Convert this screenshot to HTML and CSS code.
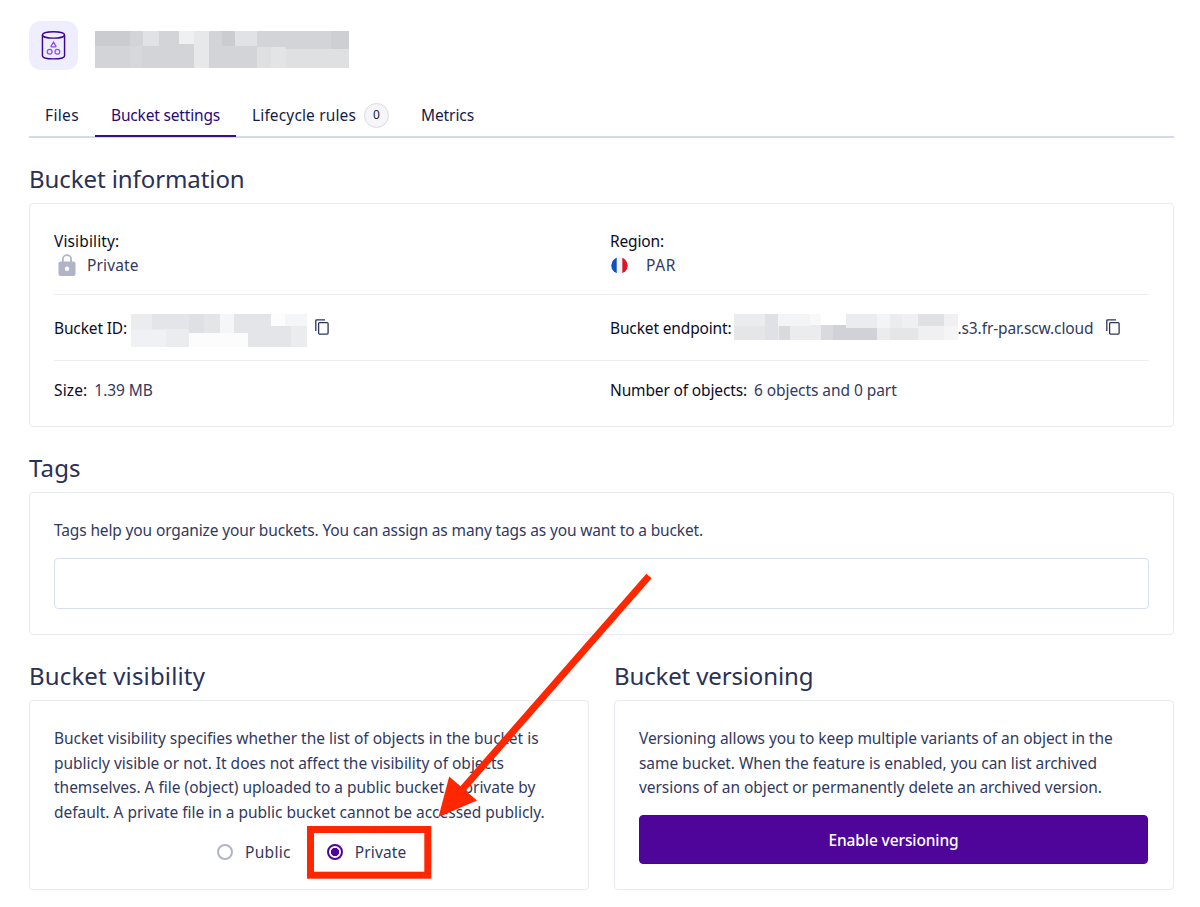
FILE: index.html
```
<!DOCTYPE html>
<html lang="en">
<head>
<meta charset="utf-8">
<title>Bucket settings</title>
<link rel="stylesheet" href="styles.css">
</head>
<body>
<main class="page">
  <header class="header">
    <div class="product-icon">
      <svg width="25" height="31" viewBox="0 0 26 32" fill="none">
        <g stroke="#390791" stroke-width="1.5"><ellipse cx="13" cy="5" rx="11.500" ry="3.300"/><path d="M1.500 5V26.600C1.500 31 24.500 31 24.500 26.600V5"/></g>
        <g stroke="#8f4bf5" stroke-width="1.3"><path d="M13 12.300L15.500 16.600Q15.700 17.400 15 17.400H11Q10.300 17.400 10.500 16.600Z" stroke-linejoin="round"/><circle cx="9" cy="22.500" r="2.500"/><circle cx="17" cy="22.500" r="2.500"/></g>
      </svg>
    </div>
    <svg class="mask" width="254" height="37" viewBox="0 0 762 111" preserveAspectRatio="none" shape-rendering="crispEdges">
      <path fill="#d3d4d7" d="M0 0h762v111H0z"/>
      <path fill="#cbccd0" d="M0 0h105v46H0zM380 0h41v46h-41z"/>
      <path fill="#d7d8db" d="M105 46h35v65h-35z"/>
      <path fill="#e1e2e5" d="M145 0h46v46h-46zM421 0h65v46h-65z"/>
      <path fill="#eff0f2" d="M252 0h44v40h-44z"/>
      <path fill="#e7e8ea" d="M296 0h46v111h-46z"/>
      <path fill="#dfe0e2" d="M486 48h86v5h190v58H486z"/>
      <path fill="#e3e4e6" d="M528 48h44v63h-44z"/>
      <path fill="#cecfd3" d="M708 0h54v53h-54z"/>
    </svg>
  </header>

  <nav class="tabs">
    <a class="tab tab-files">Files</a>
    <a class="tab tab-settings active">Bucket settings</a>
    <a class="tab tab-rules">Lifecycle rules<span class="badge">0</span></a>
    <a class="tab tab-metrics">Metrics</a>
  </nav>

  <section class="section info">
    <h2>Bucket information</h2>
    <div class="card">
      <div class="row first">
        <div class="cell">
          <div class="label wide">Visibility:</div>
          <div class="value wide">
            <svg class="lock" width="18" height="22" viewBox="0 0 18 22"><path fill="none" stroke="#b1b4c7" stroke-width="1.800" d="M4.900 8V5.200a4.100 4.100 0 0 1 8.200 0V8"/><path fill="#b1b4c7" fill-rule="evenodd" d="M2.500 7.500h13a2 2 0 0 1 2 2V20a2 2 0 0 1-2 2h-13a2 2 0 0 1-2-2V9.500a2 2 0 0 1 2-2zM9 12.500a2.200 2.200 0 1 0 0 4.400 2.200 2.200 0 0 0 0-4.400z"/></svg>
            Private
          </div>
        </div>
        <div class="cell">
          <div class="label">Region:</div>
          <div class="value region">
            <svg class="flag" width="17" height="17" viewBox="0 0 17 17"><clipPath id="round"><circle cx="8.500" cy="8.500" r="8.200"/></clipPath><g clip-path="url(#round)"><path fill="#f2f1f4" d="M0 0h17v17H0z"/><path fill="#0d51ba" d="M0 0h5.700v17H0z"/><path fill="#dc1428" d="M11.300 0H17v17h-5.700z"/></g></svg>
            PAR
          </div>
        </div>
      </div>
      <div class="row">
        <div class="cell inline">
          <span class="label">Bucket ID:</span>
          <svg class="id-mask" width="176" height="33" viewBox="0 0 528 99" preserveAspectRatio="none" shape-rendering="crispEdges">
            <path fill="#ebecee" d="M0 0h528v99H0z"/>
            <path fill="#e4e5e8" d="M63 0h112v46H63zM218 0h50v58h-50zM308 0h113v58h-113zM352 35h128v64H352z"/>
            <path fill="#dfe0e4" d="M175 0h43v58h-43z"/>
            <path fill="#f0f1f4" d="M0 47h105v52H0z"/>
            <path fill="#f5f6f8" d="M268 0h40v58h-40zM463 0h65v35h-65z"/>
            <path fill="#fcfcfd" d="M175 58h177v41H175zM421 0h42v35h-42z"/>
          </svg>
          <svg class="copy" width="14" height="16" viewBox="0 0 14 16" fill="none" stroke="#2c3459" stroke-width="1.300"><path d="M.8 12V1.900Q.8.8 1.900.8H10"/><rect x="3.600" y="3.600" width="9.500" height="11.500" rx="1"/></svg>
        </div>
        <div class="cell inline">
          <span class="label">Bucket endpoint:</span>
          <svg class="host-mask" width="224" height="26" viewBox="0 0 672 78" preserveAspectRatio="none" shape-rendering="crispEdges">
            <path fill="#ebecee" d="M0 0h672v78H0z"/>
            <path fill="#e5e6e8" d="M0 36h92v42H0zM468 42h86v36h-86z"/>
            <path fill="#e0e1e6" d="M92 0h40v78H92z"/>
            <path fill="#f3f4f6" d="M132 0h96v36h-96zM428 0h40v42h-40z"/>
            <path fill="#f8f8f9" d="M228 0h32v33h-32z"/>
            <path fill="#fff" d="M260 0h76v33h-76z"/>
            <path fill="#d9dade" d="M135 36h33v42h-33zM260 33h37v45h-37z"/>
            <path fill="#d1d2d7" d="M297 33h39v9h92v36H297z"/>
            <path fill="#e0e1e3" d="M553 0h78v36h-78z"/>
            <path fill="#f0f0f2" d="M504 0h49v42h-49zM553 36h78v42h-78zM631 0h41v36h-41z"/>
            <path fill="#f5f5f6" d="M631 36h41v42h-41z"/>
          </svg>
          <span class="host">.s3.fr-par.scw.cloud</span>
          <svg class="copy" width="14" height="16" viewBox="0 0 14 16" fill="none" stroke="#2c3459" stroke-width="1.300"><path d="M.8 12V1.900Q.8.8 1.900.8H10"/><rect x="3.600" y="3.600" width="9.500" height="11.500" rx="1"/></svg>
        </div>
      </div>
      <div class="row last">
        <div class="cell inline"><span class="label wide">Size:</span><span class="after">1.39 MB</span></div>
        <div class="cell inline"><span class="label">Number of objects:</span><span class="after">6 objects and 0 part</span></div>
      </div>
    </div>
  </section>

  <section class="section tags">
    <h2>Tags</h2>
    <div class="card">
      <p>Tags help you organize your buckets. You can assign as many tags as you want to a bucket.</p>
      <div class="tag-input"></div>
    </div>
  </section>

  <div class="columns">
    <section class="section visibility">
      <h2>Bucket visibility</h2>
      <div class="card">
        <p>Bucket visibility specifies whether the list of objects in the bucket is<br>publicly visible or not. It does not affect the visibility of objects<br>themselves. A file (object) uploaded to a public bucket is private by<br>default. A private file in a public bucket cannot be accessed publicly.</p>
        <div class="radios">
          <label class="option public"><i class="radio"></i>Public</label>
          <label class="option wide"><i class="radio checked"></i>Private</label>
        </div>
      </div>
    </section>
    <section class="section versioning">
      <h2>Bucket versioning</h2>
      <div class="card">
        <p>Versioning allows you to keep multiple variants of an object in the<br>same bucket. When the feature is enabled, you can list archived<br>versions of an object or permanently delete an archived version.</p>
        <button class="primary">Enable versioning</button>
      </div>
    </section>
  </div>

  <svg class="annotation" width="1200" height="907" viewBox="0 0 1200 907">
    <path stroke="#ff2600" stroke-width="7" d="M649 576L460 792"/>
    <path fill="#ff2600" d="M438.500 817L449.200 776.500L477 800.500z"/>
    <rect x="310.500" y="829.500" width="117.300" height="45.700" fill="none" stroke="#ff2600" stroke-width="7"/>
  </svg>
</main>
</body>
</html>
```
FILE: styles.css
```
* { box-sizing: border-box; }
body { margin: 0; background: #fff; color: #323a5e; font: 400 15.5px/24.5px "Noto Sans", "Open Sans", sans-serif; }
.page { position: relative; width: 1200px; height: 907px; padding: 21px 26px 0 29px; overflow: hidden; }
svg { display: block; flex: none; }

.header { display: flex; gap: 17px; height: 74px; }
.product-icon { display: flex; align-items: center; justify-content: center; width: 49px; height: 49px; border-radius: 12px; background: #eeeeff; }
.header .mask { margin-top: 10px; }

.tabs { display: flex; height: 43px; border-bottom: 2px solid #d3dae9; }
.tab { display: flex; align-items: center; height: 42px; padding: 0 16px 1px; color: #151b47; white-space: nowrap; }
.tab-files { letter-spacing: .356px; }
.tab-settings { letter-spacing: -.176px; }
.tab-rules { letter-spacing: .14px; }
.tab-metrics { letter-spacing: -.096px; }
.tab.active { padding-bottom: 0; color: #280a77; border-bottom: 2px solid #34128a; }
.badge { display: flex; align-items: center; justify-content: center; width: 25px; height: 25px; margin-left: 8px; border: 1px solid #d9dbea; border-radius: 50%; background: #f5f5fa; font-size: 12px; letter-spacing: 0; color: #151b2f; }

h2 { margin: 0; height: 48px; font-size: 24px; line-height: 47px; font-weight: 400; letter-spacing: -.08px; color: #2a3056; }
.tags h2 { letter-spacing: .15px; }
.visibility h2 { letter-spacing: .15px; }
.versioning h2 { letter-spacing: -.14px; }
.card { border: 1px solid #e9eaf2; border-radius: 4px; padding: 24px; }

.info { padding-top: 17px; }
.info .card { height: 224px; }
.row { display: grid; grid-template-columns: 556px 1fr; height: 66px; border-bottom: 1px solid #eceef3; }
.row.first { height: 67px; }
.row.last { height: 60px; border: 0; }
.cell { padding-top: 1px; white-space: nowrap; }
.label { color: #0c0d28; letter-spacing: -.146px; }
.wide { letter-spacing: .13px; }
.value { display: flex; align-items: center; height: 24px; }
.lock { margin: -1px 11px 0 4px; }
.flag { margin: -1px 18px 0 1px; }
.region { letter-spacing: .615px; }
.inline { display: flex; align-items: center; }
.id-mask { margin: 4px 8px 0 4px; }
.host-mask { margin: 0 0 2px 2px; }
.host { letter-spacing: -.107px; }
.copy { margin-bottom: 2px; }
.host + .copy { margin-left: 12px; }
.last .cell { padding-bottom: 2px; }
.after { margin-left: 7px; letter-spacing: -.06px; }

.tags { padding-top: 17px; }
.tags .card { height: 143px; }
.tags p { letter-spacing: -.135px; }
p { margin: 0; padding-top: 1px; white-space: nowrap; }
.tag-input { height: 51px; margin-top: 15px; border: 1px solid #d9dfea; border-radius: 4px; }

.columns { display: grid; grid-template-columns: 560px 560px; gap: 25px; padding-top: 17px; }
.columns .card { height: 190px; }
.visibility p { letter-spacing: -.015px; }
.versioning p { letter-spacing: -.063px; }
.radios { display: flex; gap: 35px; padding: 16px 0 0 163px; }
.option { display: flex; align-items: center; }
.public { letter-spacing: .3px; }
.radio { width: 16px; height: 16px; margin-right: 12px; border: 2px solid #b1b4c7; border-radius: 50%; }
.public + .option { margin-left: 1px; }
.radio.checked { border-color: #4f0599; background: radial-gradient(#4f0599 3.800px, #fff 4.500px); }
.primary { display: block; width: 509px; height: 49px; margin-top: 15px; padding: 2px 0 0; border: 1px solid #3c0c8c; border-radius: 4px; background: #4f0599; color: #fff; font: 500 15.5px "Noto Sans", sans-serif; letter-spacing: -.117px; }

.annotation { position: absolute; left: 0; top: 0; pointer-events: none; }
```
